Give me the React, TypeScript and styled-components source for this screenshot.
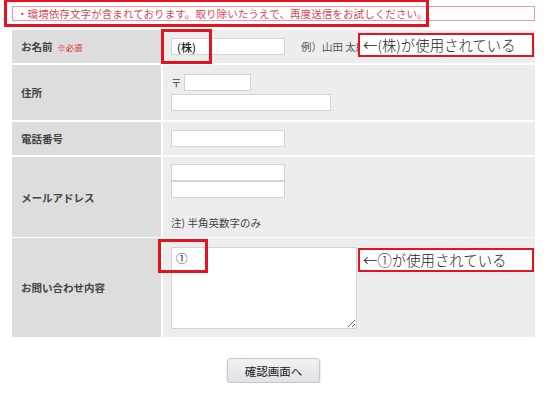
import styled, { createGlobalStyle } from 'styled-components'

const GlobalStyle = createGlobalStyle`
  html, body {
    margin: 0;
    padding: 0;
    background: #fff;
    font-family: 'Noto Sans CJK JP', 'Noto Sans', sans-serif;
    color: #444;
  }
`

const Page = styled.div`
  position: relative;
  width: 550px;
  padding: 6px 15px 0 12px;
  box-sizing: border-box;
`

const ErrorBox = styled.div`
  height: 15px;
  border: 1px solid #f09aa4;
  box-sizing: border-box;
  padding-left: 4px;
  font-size: 10.6px;
  line-height: 13px;
  color: #e2455c;
  white-space: nowrap;
`

const Mark = styled.div<{ left: number; top: number; w: number; h: number }>`
  position: absolute;
  left: ${(p) => p.left}px;
  top: ${(p) => p.top}px;
  width: ${(p) => p.w}px;
  height: ${(p) => p.h}px;
  border: 3px solid #e3141f;
  box-sizing: border-box;
  pointer-events: none;
`

const Callout = styled.div<{ left: number; top: number }>`
  position: absolute;
  left: ${(p) => p.left}px;
  top: ${(p) => p.top}px;
  width: 176px;
  height: 24px;
  border: 2.5px solid #e3141f;
  box-sizing: border-box;
  background: #fff;
  padding-left: 3px;
  font-size: 14.4px;
  font-weight: 300;
  line-height: 19px;
  color: #222;
  white-space: nowrap;
`

const Table = styled.div`
  margin-top: 9px;
  width: 523px;
  display: grid;
  grid-template-columns: 149px 1fr;
  column-gap: 2px;
  background: #fff;
`

const LabelCell = styled.div<{ h: number; gapTop: number }>`
  height: ${(p) => p.h}px;
  margin-top: ${(p) => p.gapTop}px;
  background: #dddddd;
  display: flex;
  align-items: center;
  padding-left: 9px;
  font-size: 10.5px;
  font-weight: 700;
  color: #444;
`

const Required = styled.span`
  margin-left: 5px;
  font-size: 8.2px;
  font-weight: 400;
  color: #d8232a;
`

const ValueCell = styled.div<{ h: number; gapTop: number }>`
  position: relative;
  height: ${(p) => p.h}px;
  margin-top: ${(p) => p.gapTop}px;
  background: #ededed;
  box-sizing: border-box;
  padding-left: 8px;
  display: flex;
  flex-direction: column;
  justify-content: center;
  font-size: 10.5px;
  color: #444;
`

const Line = styled.div<{ mt?: number }>`
  display: flex;
  align-items: center;
  margin-top: ${(p) => p.mt ?? 0}px;
`

const Input = styled.input<{ w: number }>`
  width: ${(p) => p.w}px;
  height: 17px;
  box-sizing: border-box;
  border: 1px solid #d4d4d4;
  background: #fff;
  margin: 0;
  padding: 0 5px;
  font-family: inherit;
  font-size: 11px;
  font-weight: 500;
  color: #222;
  outline: none;
`

const Postal = styled.span`
  width: 13px;
  font-size: 10.5px;
`

const Example = styled.span`
  margin-left: 16px;
  font-size: 10.5px;
  color: #555;
`

const Note = styled.div`
  margin-top: 17px;
  font-size: 10.5px;
`

const Area = styled.textarea`
  width: 186px;
  height: 82px;
  box-sizing: border-box;
  border: 1px solid #d4d4d4;
  background: #fff;
  margin: 0;
  padding: 2px 4px;
  font-family: inherit;
  font-size: 11.5px;
  color: #222;
  outline: none;
`

const Actions = styled.div`
  width: 523px;
  display: flex;
  justify-content: center;
  padding-top: 21px;
`

const Button = styled.button`
  width: 93px;
  height: 25px;
  border: 1px solid #c6c6cb;
  border-radius: 4px;
  background: linear-gradient(#f2f2f5, #e2e2e7);
  box-shadow: 0 1px 2px rgba(0, 0, 0, 0.25);
  font-family: inherit;
  font-size: 11.5px;
  color: #222;
  padding: 0;
`

export default function App() {
  return (
    <>
      <GlobalStyle />
      <Page>
        <ErrorBox>・環境依存文字が含まれております。取り除いたうえで、再度送信をお試しください。</ErrorBox>
        <Mark left={4} top={-1} w={425} h={28} />

        <Table>
          <LabelCell h={33} gapTop={0}>
            お名前<Required>※必須</Required>
          </LabelCell>
          <ValueCell h={33} gapTop={0}>
            <Line>
              <Input w={114} defaultValue="(株)" />
              <Example>例）山田 太郎</Example>
            </Line>
            <Mark left={-2} top={-1} w={51} h={35} />
            <Callout left={195} top={3}>←(株)が使用されている</Callout>
          </ValueCell>

          <LabelCell h={55} gapTop={2}>住所</LabelCell>
          <ValueCell h={55} gapTop={2}>
            <Line>
              <Postal>〒</Postal>
              <Input w={67} />
            </Line>
            <Line mt={3}>
              <Input w={160} />
            </Line>
          </ValueCell>

          <LabelCell h={33} gapTop={2}>電話番号</LabelCell>
          <ValueCell h={33} gapTop={2}>
            <Line>
              <Input w={114} />
            </Line>
          </ValueCell>

          <LabelCell h={80} gapTop={2}>メールアドレス</LabelCell>
          <ValueCell h={80} gapTop={2}>
            <Line>
              <Input w={114} />
            </Line>
            <Line mt={0}>
              <Input w={114} />
            </Line>
            <Note>注) 半角英数字のみ</Note>
          </ValueCell>

          <LabelCell h={99} gapTop={1}>お問い合わせ内容</LabelCell>
          <ValueCell h={99} gapTop={1}>
            <Line>
              <Area defaultValue="①" />
            </Line>
            <Mark left={-5} top={1} w={50} h={34} />
            <Callout left={195} top={10}>←①が使用されている</Callout>
          </ValueCell>
        </Table>

        <Actions>
          <Button type="button">確認画面へ</Button>
        </Actions>
      </Page>
    </>
  )
}
